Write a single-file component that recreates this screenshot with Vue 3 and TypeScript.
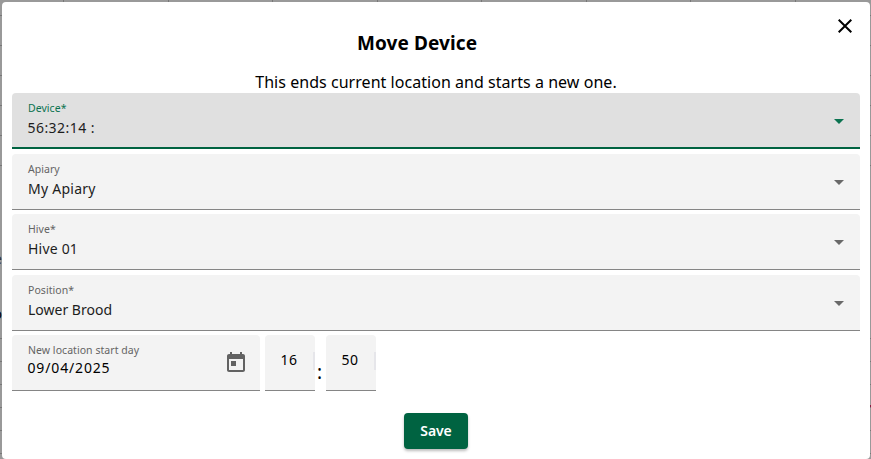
<script setup lang="ts">
import { ref } from 'vue'

interface SelectField {
  id: string
  label: string
  value: string
}

const fields = ref<SelectField[]>([
  { id: 'device', label: 'Device*', value: '56:32:14 :' },
  { id: 'apiary', label: 'Apiary', value: 'My Apiary' },
  { id: 'hive', label: 'Hive*', value: 'Hive 01' },
  { id: 'position', label: 'Position*', value: 'Lower Brood' },
])
const focused = ref('device')
const startDay = ref('09/04/2025')
const hour = ref('16')
const minute = ref('50')
</script>

<template>
  <div class="backdrop">
    <div class="rules left">
      <i v-for="n in 6" :key="n"></i>
      <span class="peek peek-e">e</span>
      <span class="peek peek-o">o</span>
    </div>
    <div class="rules left lower"><i v-for="n in 6" :key="n"></i></div>
    <div class="rules top"><i v-for="n in 8" :key="n"></i></div>
    <div class="rules right"><i v-for="n in 6" :key="n"></i><b class="marker"></b></div>
    <div class="rules right lower"><i v-for="n in 6" :key="n"></i></div>
    <section class="dialog" role="dialog" aria-labelledby="title">
      <button class="close" type="button" aria-label="Close">
        <svg width="14" height="14" viewBox="0 0 14 14"><path d="M.7.7 13.3 13.3M13.3.7.7 13.3" fill="none" stroke="#000" stroke-width="2" /></svg>
      </button>
      <h1 id="title">Move Device</h1>
      <p class="intro">This ends current location and starts a new one.</p>
      <div class="fields">
        <div
          v-for="field in fields"
          :key="field.id"
          class="field select"
          :class="[field.id, { focused: focused === field.id }]"
          @click="focused = field.id"
        >
          <span class="label">{{ field.label }}</span>
          <span class="value">{{ field.value }}</span>
          <svg class="arrow" width="10" height="5" viewBox="0 0 10 5"><path d="M0 0h10L5 5z" fill="currentColor" /></svg>
        </div>
      </div>
      <div class="when">
        <div class="field day">
          <span class="label">New location start day</span>
          <span class="value">{{ startDay }}</span>
          <svg class="calendar" width="24" height="24" viewBox="0 0 24 24"><path fill="currentColor" d="M19 3h-1V1h-2v2H8V1H6v2H5c-1.11 0-1.99.9-1.99 2L3 19c0 1.1.89 2 2 2h14c1.1 0 2-.9 2-2V5c0-1.1-.9-2-2-2zm0 16H5V8h14v11zM7 10h5v5H7z" /></svg>
        </div>
        <div class="field time"><span class="value">{{ hour }}</span><i class="spinner"></i></div>
        <span class="colon">:</span>
        <div class="field time"><span class="value">{{ minute }}</span><i class="spinner"></i></div>
      </div>
      <button class="save" type="button"><span>Save</span></button>
    </section>
  </div>
</template>

<style>
body { overflow: hidden; }
</style>

<style scoped>
* { box-sizing: border-box; }
.backdrop {
  position: relative;
  width: 871px;
  height: 459px;
  padding: 2px 1px 0 2px;
  overflow: hidden;
  background: #999;
  font-family: "Noto Sans", "Open Sans", sans-serif;
  color: #000;
}
.rules { position: absolute; display: flex; }
.left, .right { top: 15px; width: 2px; flex-direction: column; gap: 29px; }
.left { left: 0; }
.right { right: 0; width: 1px; }
.lower { top: 338px; gap: 22px; }
.rules i { flex: none; background: #777; }
.left i, .right i { height: 1px; }
.top { top: 0; left: 63px; height: 2px; gap: 103.5px; }
.top i { width: 1px; height: 2px; }
.peek { position: absolute; right: 0; font-size: 14px; line-height: 16px; }
.peek-e { top: 236px; color: #333; }
.peek-o { top: 291px; }
.marker { position: absolute; top: 390px; width: 1px; height: 2px; background: #861b40; }
.dialog {
  position: relative;
  display: flex;
  flex-direction: column;
  width: 868px;
  height: 457px;
  padding: 28px 10px 0;
  border-radius: 4px;
  background: #fff;
}
button { padding: 0; border: 0; font: inherit; }
.close { position: absolute; top: 17px; right: 18px; width: 14px; height: 14px; background: none; }
.close svg { display: block; }
h1 {
  margin: 0 38px 0 0;
  text-align: center;
  font-size: 19px;
  line-height: 26px;
  font-weight: 700;
  letter-spacing: 0.1px;
}
.intro {
  margin: 16px 0 0;
  height: 21px;
  text-align: center;
  font-size: 16px;
  line-height: 20px;
  letter-spacing: 0.04px;
}
.fields { display: flex; flex-direction: column; }
.field {
  display: flex;
  flex-direction: column;
  position: relative;
  height: 56px;
  padding: 7px 16px 0;
  border-bottom: 1px solid #858585;
  border-radius: 4px 4px 0 0;
  background: #f3f3f3;
  white-space: nowrap;
}
.apiary { margin-top: 5px; }
.hive { margin-top: 4px; }
.position { margin-top: 5px; }
.fields .field.focused { border-bottom: 2px solid #006341; background: #e0e0e0; }
.label { font-size: 10.5px; line-height: 16px; color: #646464; letter-spacing: 0.05px; }
.focused .label, .focused .arrow { color: #0b7350; }
.value { margin-top: 3px; font-size: 14px; line-height: 18px; color: #1d1d1d; letter-spacing: 0.1px; }
.apiary .value { letter-spacing: 0.25px; }
.hive .value { letter-spacing: 0.2px; }
.position .value { letter-spacing: 0; }
.device .value { margin-left: -0.5px; letter-spacing: 0.45px; }
.arrow { position: absolute; right: 16px; top: 26px; color: #696969; }
.when { display: flex; height: 56px; margin-top: 4px; }
.day { width: 248px; }
.day .value { margin: 1px 0 0 -0.5px; color: #000; letter-spacing: 0.85px; }
.calendar { position: absolute; right: 12px; top: 16px; color: #626262; }
.time { width: 50px; margin-left: 5px; padding: 16px 0 0 15.5px; }
.time .value { margin: 0; color: #000; letter-spacing: 0.6px; }
.spinner { position: absolute; right: 0; top: 17px; width: 2px; height: 18px; background: #e6e6ea; }
.colon { width: 6px; padding: 25px 0 0 2px; font-size: 19px; line-height: 24px; }
.save {
  align-self: center;
  flex: none;
  width: 64px;
  height: 36px;
  margin-top: 22px;
  border-radius: 4px;
  background: #006341;
  color: #fff;
  font-size: 14px;
  line-height: 34px;
  font-weight: 600;
  letter-spacing: -0.1px;
  box-shadow: 0 2px 3px #0004;
}
</style>
